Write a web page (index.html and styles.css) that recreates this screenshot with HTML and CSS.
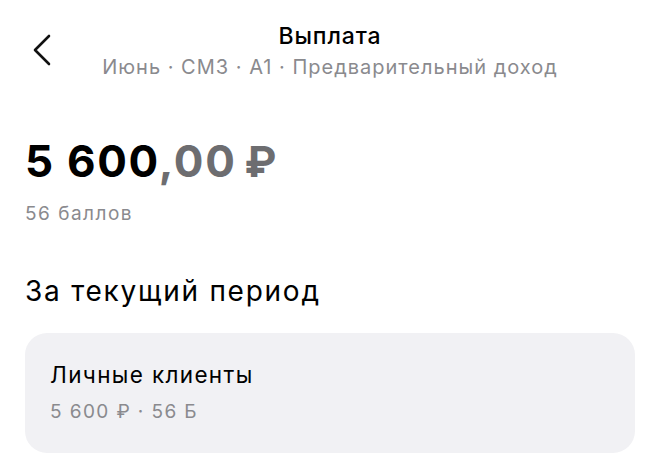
FILE: index.html
```html
<!DOCTYPE html>
<html lang="ru">
<head>
<meta charset="utf-8">
<link rel="stylesheet" href="styles.css">
</head>
<body>
<div class="page">
  <header class="topbar">
    <button class="back" aria-label="Назад">
      <svg width="20" height="32" viewBox="0 0 20 32"><path d="M17 2 L3 16 L17 30" fill="none" stroke="#111" stroke-width="2.6" stroke-linecap="round" stroke-linejoin="round"/></svg>
    </button>
    <div class="titles">
      <div class="title">Выплата</div>
      <div class="subtitle">Июнь · СМЗ · А1 · Предварительный доход</div>
    </div>
  </header>

  <section class="amount-block">
    <div class="amount"><span class="int">5 600</span><span class="frac">,00</span><span class="cur">₽</span></div>
    <div class="points">56 баллов</div>
  </section>

  <h2 class="section-title">За текущий период</h2>

  <div class="card">
    <div class="card-title">Личные клиенты</div>
    <div class="card-sub">5 600 ₽ · 56 Б</div>
  </div>
</div>
</body>
</html>
```
FILE: styles.css
```css
* { box-sizing: border-box; }
html, body { margin: 0; padding: 0; background: #fff; }
body { font-family: Inter, "Noto Sans", sans-serif; color: #000; }
.page { padding: 0 25px; }
.topbar { position: relative; display: flex; justify-content: center; padding-top: 22px; }
.back { position: absolute; left: 7px; top: 34px; border: 0; background: none; padding: 0; width: 20px; height: 32px; }
.back svg { display: block; }
.titles { display: flex; flex-direction: column; align-items: center; }
.title { font-size: 23px; font-weight: 500; line-height: 28px; letter-spacing: 0.9px; }
.subtitle { font-size: 20px; color: #8a8a8e; line-height: 24px; margin-top: 5px; letter-spacing: 1px; }
.amount-block { margin-top: 56px; }
.amount { font-size: 44px; font-weight: 700; line-height: 52px; letter-spacing: 1.7px; }
.frac { color: #6d6d70; }
.cur { color: #6d6d70; font-size: 43px; margin-left: 8px; letter-spacing: 0; }
.points { font-size: 19px; color: #8a8a8e; margin-top: 15px; line-height: 24px; letter-spacing: 1.5px; }
.section-title { font-size: 28px; font-weight: 400; margin: 48px 0 0 0; line-height: 34px; letter-spacing: 1.75px; }
.card { margin-top: 25px; background: #f1f1f4; border-radius: 22px; padding: 28px 25px 0; height: 120px; }
.card-title { font-size: 22.5px; line-height: 28px; letter-spacing: 1.35px; }
.card-sub { font-size: 19px; color: #8a8a8e; margin-top: 11px; line-height: 24px; letter-spacing: 1.4px; }
```
